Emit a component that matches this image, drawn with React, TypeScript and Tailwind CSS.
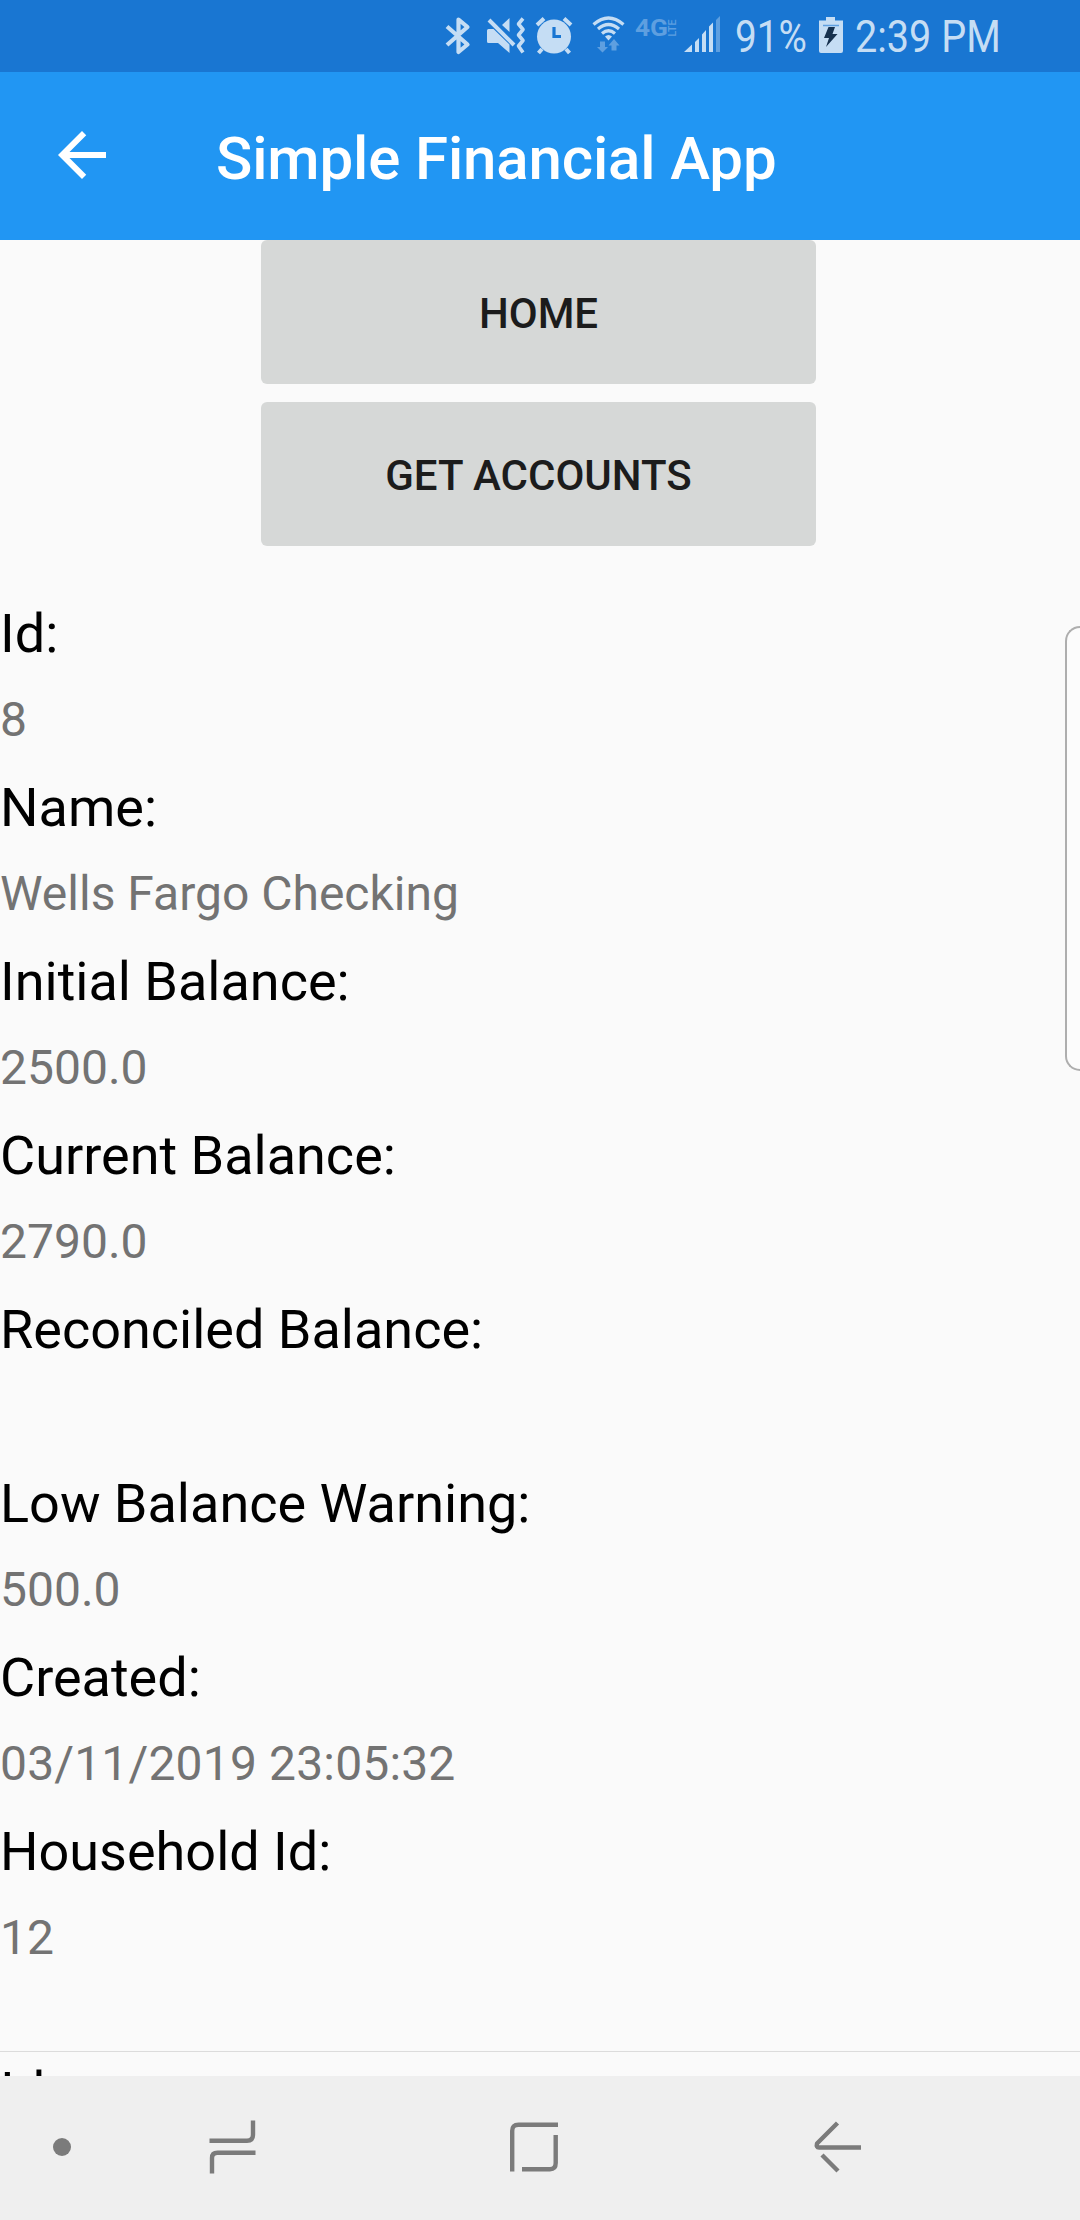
import React from "react";

const record = [
  { label: "Id:", value: "8" },
  { label: "Name:", value: "Wells Fargo Checking" },
  { label: "Initial Balance:", value: "2500.0" },
  { label: "Current Balance:", value: "2790.0" },
  { label: "Reconciled Balance:", value: "" },
  { label: "Low Balance Warning:", value: "500.0" },
  { label: "Created:", value: "03/11/2019 23:05:32", loose: true },
  { label: "Household Id:", value: "12" },
];

function BluetoothIcon() {
  return (
    <svg className="ml-[445px] shrink-0" width="26" height="40" viewBox="0 0 26 40" fill="none" stroke="#c5ddf4" strokeWidth="4.200" strokeLinejoin="round">
      <path d="M2 10.500 L22.500 28.500 L13.500 36 V3.500 L22.500 11 L2 29" />
    </svg>
  );
}

function MuteVibrateIcon() {
  return (
    <svg className="ml-[15px] shrink-0" width="40" height="40" viewBox="0 0 40 40">
      <path d="M23.500 2 V16 L16 9 Z" fill="#c5ddf4" />
      <path d="M1 14.500 Q1 13 2.500 13 H7.500 L23.500 28.500 V37 L12 27 H2.500 Q1 27 1 25.500 Z" fill="#c5ddf4" />
      <path d="M3 4 L28 29" stroke="#c5ddf4" strokeWidth="4" />
      <path d="M37 2.500 L32.500 8 L37 13.500 L32.500 19 L37 24.500 L32.500 30 L37 36.500" fill="none" stroke="#c5ddf4" strokeWidth="3.600" strokeLinejoin="round" />
    </svg>
  );
}

function AlarmIcon() {
  return (
    <svg className="ml-[8px] shrink-0" width="40" height="40" viewBox="0 0 40 40">
      <circle cx="20" cy="20.500" r="17" fill="#c5ddf4" />
      <path d="M3 9 L10 2.500 M30 2.500 L37 9 M8 33 L4.500 37 M32 33 L35.500 37" stroke="#c5ddf4" strokeWidth="4" />
      <path d="M20 11 V20.500 H27" fill="none" stroke="#1976d2" strokeWidth="3.200" />
    </svg>
  );
}

function WifiIcon() {
  return (
    <svg className="ml-[18px] shrink-0" width="34" height="40" viewBox="0 0 34 40">
      <g fill="none" stroke="#c5ddf4" strokeWidth="3.200">
        <path d="M1.500 8.500 Q16.500 -4.500 31.500 8.500" />
        <path d="M6 13 Q16.500 4 27 13" />
        <path d="M10 17.500 Q16.500 12 23 17.500" />
      </g>
      <path d="M13 20.500 Q16.500 17.500 20 20.500 L16.500 24.500 Z" fill="#c5ddf4" />
      <path d="M8 25.500 H13 V31 H16 L10.500 36.500 L5 31 H8 Z M19.500 34.500 V29.500 H16.500 L22 23 L27.500 29.500 H24.500 V34.500 Z" fill="#5e9fe0" />
    </svg>
  );
}

function LteMark() {
  return (
    <svg className="ml-[9px] shrink-0 overflow-visible" width="42" height="40" viewBox="0 0 42 40" fill="#5e9fe0" fontFamily="Roboto">
      <text x="0" y="20" fontSize="23" fontWeight="700" textLength="33" lengthAdjust="spacingAndGlyphs">4G</text>
      <text transform="translate(41 20.500) rotate(-90)" x="0" y="0" fontSize="11" fontWeight="500" textLength="17" lengthAdjust="spacingAndGlyphs">LTE</text>
    </svg>
  );
}

function SignalIcon() {
  return (
    <svg className="ml-[7px] shrink-0" width="38" height="40" viewBox="0 0 38 40">
      <path d="M0 36 L8 28.500 V36 Z M11 26 L15 22 V36 H11 Z M18 18.500 L22 14 V36 H18 Z M25 10.500 L29 6.500 V36 H25 Z" fill="#c5ddf4" />
      <path d="M32 4 L36 0 V36 H32 Z" fill="#5e9fe0" />
    </svg>
  );
}

function BatteryIcon() {
  return (
    <svg className="ml-[12px] shrink-0" width="26" height="40" viewBox="0 0 26 40">
      <path d="M8 1 H17 V4.500 H25 V35 Q25 37 23 37 H3 Q1 37 1 35 V4.500 H8 Z" fill="#c5ddf4" />
      <path d="M5 9.500 H21" stroke="#5e9fe0" strokeWidth="1.500" />
      <path d="M10.500 11 H17 L14.500 18 H19.500 L8 31 L11 22 H6 Z" fill="#16314f" />
    </svg>
  );
}

function StatusBar() {
  return (
    <div className="flex h-[72px] shrink-0 items-center bg-[#1976d2] text-[45px] leading-[73px] text-[#c5ddf4]">
      <BluetoothIcon />
      <MuteVibrateIcon />
      <AlarmIcon />
      <WifiIcon />
      <LteMark />
      <SignalIcon />
      <div className="ml-[13px] w-[71px] shrink-0 whitespace-nowrap">
        <span className="inline-block origin-left scale-x-[0.86]">91%</span>
      </div>
      <BatteryIcon />
      <div className="ml-[11px] w-[150px] whitespace-nowrap">
        <span className="inline-block origin-left scale-x-[0.88]">2:39 PM</span>
      </div>
    </div>
  );
}

function AppBar() {
  return (
    <header className="flex h-[168px] shrink-0 items-center bg-[#2196f3] text-white">
      <svg className="mb-[2px] ml-[46px] shrink-0" width="72" height="72" viewBox="0 0 24 24" fill="currentColor">
        <path d="M20 11H7.830l5.590-5.590L12 4l-8 8 8 8 1.410-1.410L7.830 13H20v-2z" />
      </svg>
      <h1 className="mt-[6px] ml-[98px] text-[60px] leading-[72px] font-medium tracking-[-0.14px] whitespace-nowrap">Simple Financial App</h1>
    </header>
  );
}

function ActionButton({ children }: { children: React.ReactNode }) {
  return (
    <button className="h-[144px] w-[555px] rounded-[6px] bg-[#d6d8d7] pt-[3px] text-[42px] leading-[48px] font-medium text-[#1c1c1c]">
      {children}
    </button>
  );
}

function NavBar() {
  return (
    <nav className="flex h-[144px] shrink-0 items-center bg-[#efefef] pb-[2px] text-[#7b7b7b]">
      <div className="ml-[53px] size-[18px] shrink-0 rounded-full bg-[#7b7b7b]" />
      <svg className="ml-[137px] shrink-0" width="50" height="56" viewBox="0 0 50 56" fill="none" stroke="currentColor" strokeWidth="4.400">
        <path d="M1.500 21.800 H39 Q45 21.800 45 15.800 V1.500 M4 54.500 V39 Q4 33.800 9.500 33.800 H47.500" />
      </svg>
      <svg className="ml-[251px] shrink-0" width="50" height="52" viewBox="0 0 50 52" fill="none" stroke="currentColor" strokeWidth="4.400">
        <path d="M3.200 50.500 V10 Q3.200 3.700 9.500 3.700 H49 M46.700 14 V42 Q46.700 48.200 41 48.200 H13" />
      </svg>
      <svg className="ml-[254px] shrink-0" width="50" height="54" viewBox="0 0 50 54" fill="none" stroke="currentColor" strokeWidth="4.400">
        <path d="M24.500 3 L4 23.500 Q3 27.500 6 27.500 H48 M9 35 L25 51" strokeLinejoin="round" />
      </svg>
    </nav>
  );
}

export default function App() {
  return (
    <div className="relative flex h-[2220px] w-[1080px] flex-col overflow-hidden bg-[#fafafa] font-['Roboto',sans-serif]">
      <StatusBar />
      <AppBar />
      <main className="min-h-0 flex-1 overflow-hidden">
        <div className="flex flex-col gap-[18px] pl-[261px]">
          <ActionButton>HOME</ActionButton>
          <ActionButton>GET ACCOUNTS</ActionButton>
        </div>
        <dl className="mt-[52px] border-b border-[#dcdcdc] pb-[61px]">
          {record.map((field) => (
            <div key={field.label} className="h-[174px] whitespace-nowrap">
              <dt className="text-[54px] leading-[72px] text-black">{field.label}</dt>
              <dd className={field.loose ? "text-[48px] leading-[100px] tracking-[0.16px] text-[#737373]" : "text-[48px] leading-[100px] text-[#737373]"}>
                {field.value}
              </dd>
            </div>
          ))}
        </dl>
        <div className="pt-[4px] text-[54px] leading-[72px] text-black">Id:</div>
      </main>
      <NavBar />
      {/* Edge panel handle overlaying the right side of the screen */}
      <div className="absolute top-[626px] right-0 h-[445px] w-[15px] rounded-l-[18px] border-2 border-r-0 border-[#aeaeae] bg-[#fcfcfc]" />
    </div>
  );
}
